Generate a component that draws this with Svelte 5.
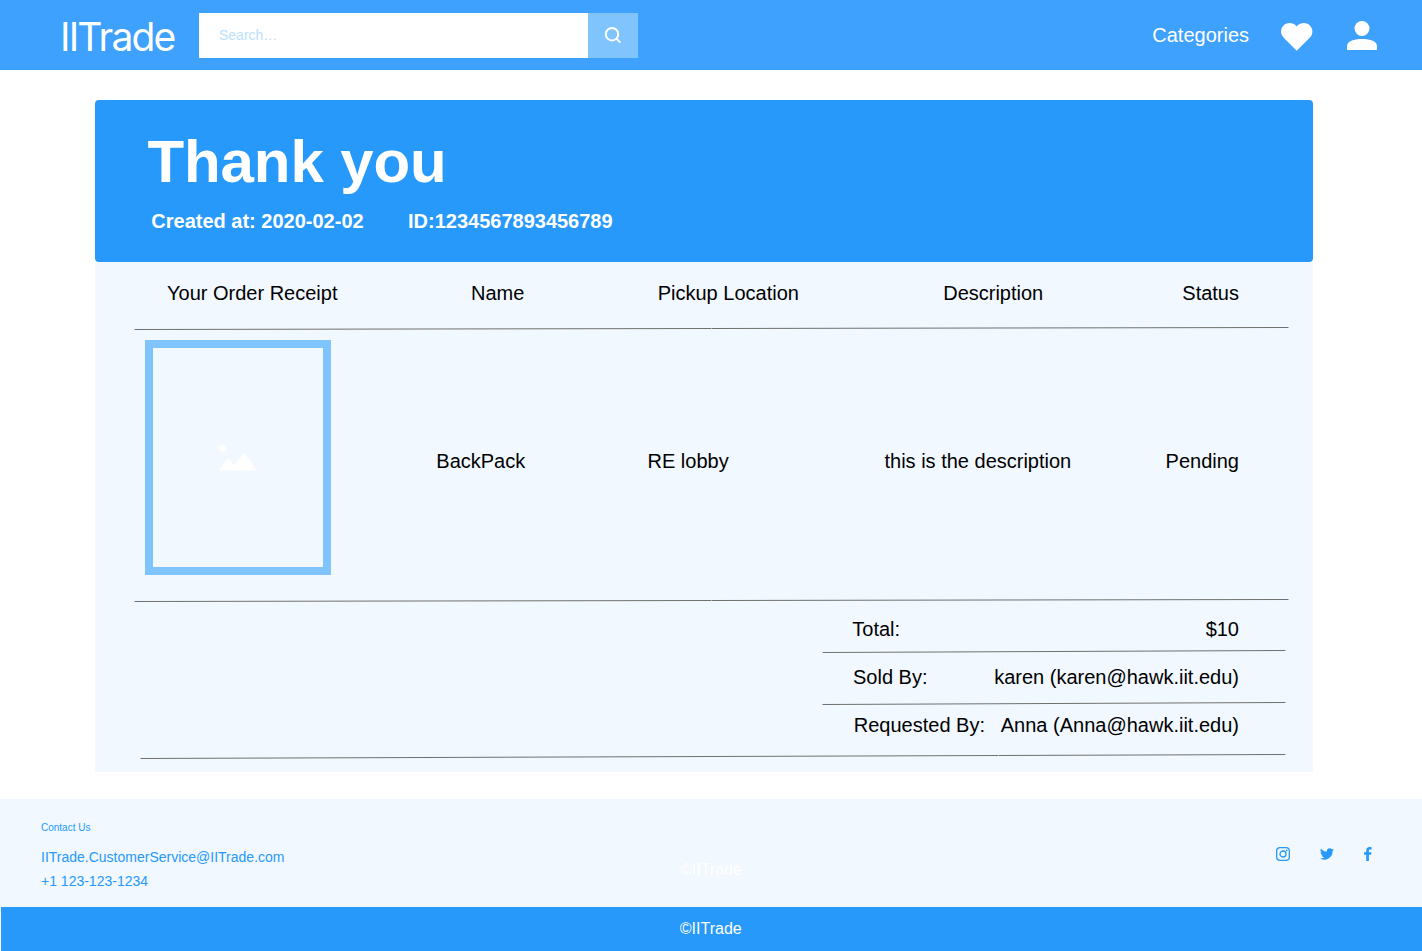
<script>
  const headings = ['Your Order Receipt', 'Name', 'Pickup Location', 'Description'];
  const item = ['BackPack', 'RE lobby', 'this is the description'];
</script>

<div class="page">
  <header class="topbar">
    <div class="logo">IITrade</div>
    <div class="search">
      <div class="field">Search…</div>
      <div class="go">
        <svg width="18" height="18" viewBox="0 0 18 18" fill="none" stroke="#fff" stroke-width="2">
          <circle cx="8" cy="7.2" r="6.2" />
          <path d="M12.4 11.6L16.4 15.6" />
        </svg>
      </div>
    </div>
    <nav>
      <span>Categories</span>
      <svg class="heart" width="32" height="28" viewBox="0 0 32 28" fill="#fff">
        <path d="M15.7 27.8L2.5 14.4C-0.8 11-0.8 6 2.2 2.9C5.7-0.8 11.7-1 15.7 3.3C19.9-1 25.9-0.8 29.2 2.9C32.2 6 32.2 11 28.9 14.4Z" />
      </svg>
      <svg class="user" width="30" height="30" viewBox="0 0 30 30" fill="#fff">
        <circle cx="15" cy="7.5" r="7.5" />
        <path d="M0 29V25C0 20.5 6.5 18 15 18S30 20.5 30 25V29Z" />
      </svg>
    </nav>
  </header>

  <main>
    <section class="banner">
      <h1>Thank you</h1>
      <div class="meta">
        <span class="date">Created at: 2020-02-02</span>
        <span>ID:1234567893456789</span>
      </div>
    </section>

    <section class="receipt">
      <div class="row head">
        {#each headings as heading}
          <span>{heading}</span>
        {/each}
        <span class="end">Status</span>
      </div>
      <svg class="rule" width="1218" height="6" stroke="#707070">
        <path d="M39.5 4.5L616 3.5M616.5 3.5L1193.5 2.5" />
      </svg>
      <div class="row item">
        <div class="thumb">
          <svg width="38" height="28" viewBox="0 0 38 28" fill="#fff">
            <circle cx="3.7" cy="4.2" r="3.6" />
            <path d="M0.5 26.6L9.2 13.8L15.2 21.5L25.2 8.6L37.5 26.6Z" />
          </svg>
        </div>
        {#each item as value}
          <span>{value}</span>
        {/each}
        <span class="end">Pending</span>
      </div>
      <svg class="rule" width="1218" height="6" stroke="#707070">
        <path d="M39.5 4.5L616 3.5M616.5 3.5L1193.5 2.5" />
      </svg>
      <div class="sum total"><span>Total:</span><span>$10</span></div>
      <svg class="rule" width="1218" height="6" stroke="#707070">
        <path d="M727.5 4.5L1190.5 2.5" />
      </svg>
      <div class="sum sold"><span>Sold By:</span><span>karen (karen@hawk.iit.edu)</span></div>
      <svg class="rule" width="1218" height="6" stroke="#707070">
        <path d="M727.5 4.5L1190.5 2.5" />
      </svg>
      <div class="sum requested"><span>Requested By:</span><span>Anna (Anna@hawk.iit.edu)</span></div>
      <svg class="rule" width="1218" height="8" stroke="#707070">
        <path d="M45.5 6.5L903.5 3.5M904 3.5L1190.5 2.5" />
      </svg>
    </section>
  </main>

  <footer>
    <div class="contact">
      <div class="info">
        <small>Contact Us</small>
        <span>IITrade.CustomerService@IITrade.com</span>
        <span>+1 123-123-1234</span>
      </div>
      <div class="ghost">©IITrade</div>
      <div class="social">
        <svg width="14" height="14" viewBox="0 0 14 14" fill="none" stroke="#2699fb" stroke-width="1.3">
          <rect x="0.65" y="0.65" width="12.7" height="12.7" rx="3.4" />
          <circle cx="7" cy="7" r="3" />
          <circle cx="10.7" cy="3.3" r="0.85" fill="#2699fb" stroke="none" />
        </svg>
        <svg width="14" height="12" viewBox="0 0 24 20" fill="#2699fb">
          <path d="M24 2.6a10 10 0 0 1-2.8.8A4.9 4.9 0 0 0 23.3.6a10 10 0 0 1-3.1 1.2A4.9 4.9 0 0 0 11.8 6.3 14 14 0 0 1 1.7 1.2a4.9 4.9 0 0 0 1.5 6.5A5 5 0 0 1 1 7.1a4.9 4.9 0 0 0 3.9 4.9 5 5 0 0 1-2.2.1 4.9 4.9 0 0 0 4.6 3.4A10 10 0 0 1 0 17.5 14 14 0 0 0 21.5 5a10 10 0 0 0 2.5-2.4z" />
        </svg>
        <svg width="8" height="14" viewBox="0 0 8 14" fill="#2699fb">
          <path d="M2.2 14V7.8H0V5.2H2.2V3.5C2.2 1.2 3.5 0 5.5 0C6.4 0 7.3.1 7.6.2V2.5H6.2C5.1 2.5 4.9 3.1 4.9 3.8V5.2H7.5L7.1 7.8H4.9V14Z" />
        </svg>
      </div>
    </div>
    <div class="copyright">©IITrade</div>
  </footer>
</div>

<style>
  :global(body) { margin: 0; background: #fff; }
  .page {
    width: 1422px;
    height: 951px;
    overflow: hidden;
    font-family: "Liberation Sans", Arial, sans-serif;
    font-size: 20px;
    line-height: 24px;
    color: #000;
    white-space: nowrap;
  }
  svg { display: block; flex: none; }
  .topbar {
    display: flex;
    align-items: center;
    height: 70px;
    box-sizing: border-box;
    padding: 0 45px 0 60px;
    background: #3da1fd;
    color: #fff;
  }
  .logo {
    width: 139px;
    font-family: Inter, sans-serif;
    font-weight: 400;
    font-size: 39px;
    line-height: 48px;
    letter-spacing: -1.8px;
    padding-top: 4px;
    box-sizing: border-box;
  }
  .search { display: flex; height: 45px; margin-top: 1px; }
  .field {
    width: 389px;
    box-sizing: border-box;
    padding-left: 20px;
    background: #fff;
    color: #bce0fd;
    font-size: 14px;
    line-height: 45px;
  }
  .go {
    display: flex;
    align-items: center;
    justify-content: center;
    width: 50px;
    background: #7fc4fd;
  }
  nav { display: flex; align-items: center; margin-left: auto; }
  .heart { margin: 4px 34px 0 32px; }
  .user { margin-top: 2px; }
  main { width: 1218px; height: 699px; padding-top: 30px; margin-left: 95px; }
  .banner {
    height: 162px;
    box-sizing: border-box;
    padding: 27px 0 0 52.5px;
    border-radius: 4px;
    background: #2699fb;
    color: #fff;
    font-weight: 700;
  }
  h1 { margin: 0; font-size: 60px; line-height: 70px; letter-spacing: -0.1px; }
  .meta { display: flex; padding: 12px 0 0 3.8px; }
  .date { width: 256.7px; }
  .receipt { height: 510px; background: #f1f8ff; }
  .row { display: grid; box-sizing: border-box; }
  .head {
    height: 63px;
    grid-template-columns: 304px 186.7px 285.5px 1fr auto;
    padding: 19px 74px 0 72px;
  }
  .item {
    height: 266px;
    align-items: center;
    grid-template-columns: 291.3px 211.2px 237px 1fr auto;
    padding: 0 74px 6px 50px;
  }
  .thumb {
    display: flex;
    align-items: center;
    justify-content: center;
    align-self: start;
    width: 186px;
    height: 235px;
    margin-top: 9px;
    box-sizing: border-box;
    border: 8px solid #7fc4fd;
  }
  .end { text-align: right; }
  .sum {
    display: flex;
    align-items: center;
    justify-content: space-between;
    height: 46px;
    box-sizing: border-box;
    padding: 0 74px 0 758px;
  }
  .total { height: 45px; padding-top: 7px; padding-left: 757.3px; }
  .requested { padding-bottom: 8px; padding-left: 758.8px; }
  .contact {
    display: grid;
    grid-template-columns: 639px 1fr auto;
    height: 108px;
    box-sizing: border-box;
    padding: 0 50px 0 41px;
    background: #f1f8ff;
    color: #2699fb;
  }
  .info { display: flex; flex-direction: column; padding-top: 17px; font-size: 14px; }
  .info small { font-size: 10px; margin-bottom: 5px; }
  .ghost { padding-top: 59px; font-size: 16px; color: #fff; }
  .social { display: flex; align-items: center; height: 14px; gap: 30px; padding-top: 48px; }
  .copyright {
    height: 44px;
    margin-left: 1px;
    padding-left: 678.8px;
    background: #2699fb;
    color: #fff;
    font-size: 16px;
    line-height: 44px;
  }
</style>
